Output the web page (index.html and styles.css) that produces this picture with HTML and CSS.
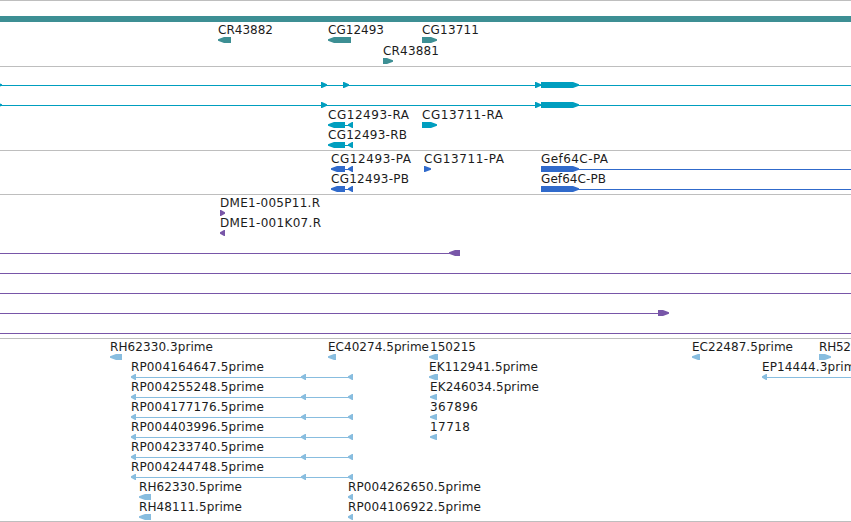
FILE: index.html
```
<!DOCTYPE html>
<html lang="en">
<head>
<meta charset="utf-8">
<title>Genome browser</title>
<link rel="stylesheet" href="styles.css">
</head>
<body>
<main class="browser" id="browser"></main>
<script src="tracks.js"></script>
</body>
</html>
```
FILE: styles.css
```
body {
  margin: 0;
  background: #fff;
  overflow: hidden;
}

.browser {
  display: flex;
  flex-direction: column;
  width: 851px;
  height: 521px;
  border-bottom: 1px solid #bebebe;
}

.track {
  flex: none;
  border-top: 1px solid #bebebe;
  fill: currentColor;
}

.track svg {
  display: block;
  width: 851px;
}

.gene { color: #3d8f94; }
.transcript { color: #009ebf; }
.protein { color: #306acb; }
.clone { color: #7856a8; }
.est { color: #88bddf; }

.line {
  shape-rendering: crispEdges;
}

.label {
  fill: #1c1c1c;
  font-family: "DejaVu Sans", sans-serif;
  font-size: 12px;
}
```
FILE: tracks.js
```
// Features: ["text", x, baseline, label, width], ["line", x1, x2, y],
// ["left" | "right", x1, x2, top], ["bar", x1, x2, top].
const tracks = [
  { name: "gene", top: 1, height: 65, features: [
    ["bar", 0, 851, 16],
    ["text", 218, 34, "CR43882", 55], ["left", 218, 231, 37],
    ["text", 328, 34, "CG12493", 56], ["left", 328, 351, 37],
    ["text", 422, 34, "CG13711", 57], ["right", 422, 437, 37],
    ["text", 383, 55, "CR43881", 56], ["right", 383, 393, 58]
  ]},
  { name: "transcript", top: 67, height: 83, features: [
    ["line", 0, 851, 85], ["right", -4, 2, 82], ["right", 321, 327, 82],
    ["right", 343, 349, 82], ["right", 535, 541, 82], ["right", 541, 579, 82],
    ["line", 0, 851, 105], ["right", -4, 2, 102], ["right", 321, 327, 102],
    ["right", 535, 541, 102], ["right", 541, 579, 102],
    ["text", 328, 119, "CG12493-RA", 81], ["left", 328, 345, 122],
    ["line", 345, 349, 125], ["left", 348, 353, 122],
    ["text", 422, 119, "CG13711-RA", 81], ["right", 422, 437, 122],
    ["text", 328, 139, "CG12493-RB", 79], ["left", 328, 345, 142],
    ["line", 345, 349, 145], ["left", 348, 353, 142]
  ]},
  { name: "protein", top: 151, height: 43, features: [
    ["text", 331, 163, "CG12493-PA", 80], ["left", 331, 345, 166],
    ["line", 345, 349, 169], ["left", 348, 353, 166],
    ["text", 424, 163, "CG13711-PA", 80], ["right", 424, 431, 166],
    ["text", 541, 163, "Gef64C-PA", 67], ["right", 541, 579, 166], ["line", 578, 851, 169],
    ["text", 331, 183, "CG12493-PB", 78], ["left", 331, 345, 186],
    ["line", 345, 349, 189], ["left", 348, 353, 186],
    ["text", 541, 183, "Gef64C-PB", 65], ["right", 541, 579, 186], ["line", 578, 851, 189]
  ]},
  { name: "clone", top: 195, height: 143, features: [
    ["text", 220, 207, "DME1-005P11.R", 100], ["right", 220, 225, 210],
    ["text", 220, 227, "DME1-001K07.R", 101], ["left", 220, 225, 230],
    ["line", 0, 450, 253], ["left", 449, 460, 250],
    ["line", 0, 851, 273], ["line", 0, 851, 293],
    ["line", 0, 658, 313], ["right", 658, 669, 310],
    ["line", 0, 851, 333]
  ]},
  { name: "est", top: 339, height: 182, features: [
    ["text", 110, 351, "RH62330.3prime", 103], ["left", 110, 122, 354],
    ["text", 328, 351, "EC40274.5prime", 101], ["left", 328, 336, 354],
    ["text", 430, 351, "150215", 46], ["left", 429, 438, 354],
    ["text", 692, 351, "EC22487.5prime", 101], ["left", 692, 700, 354],
    ["text", 819, 351, "RH52", 32], ["right", 819, 831, 354],
    ["text", 762, 371, "EP14444.3prime", 101], ["left", 762, 767, 374], ["line", 766, 851, 377],
    ["text", 429, 371, "EK112941.5prime", 109], ["left", 429, 438, 374],
    ["text", 430, 391, "EK246034.5prime", 109], ["left", 430, 437, 394],
    ["text", 430, 411, "367896", 48], ["left", 430, 437, 414],
    ["text", 430, 431, "17718", 40], ["left", 430, 437, 434],
    ["text", 139, 491, "RH62330.5prime", 103], ["left", 139, 151, 494],
    ["text", 139, 511, "RH48111.5prime", 103], ["left", 139, 151, 514],
    ["text", 348, 491, "RP004262650.5prime", 133], ["left", 348, 353, 494],
    ["text", 348, 511, "RP004106922.5prime", 133], ["left", 348, 353, 514]
  ]}
];

// Spliced ESTs share the same three exons.
["RP004164647", "RP004255248", "RP004177176", "RP004403996", "RP004233740", "RP004244748"]
  .forEach((id, i) => {
    const y = 371 + i * 20;
    tracks[4].features.push(
      ["text", 131, y, id + ".5prime", 133], ["line", 134, 350, y + 6],
      ["left", 131, 136, y + 3], ["left", 301, 306, y + 3], ["left", 348, 353, y + 3]
    );
  });

function draw([kind, a, b, c, width]) {
  if (kind === "text") {
    return `<text class="label" x="${a}" y="${b}" textLength="${width}">${c}</text>`;
  }
  if (kind === "line") {
    return `<rect class="line" x="${a}" y="${c}" width="${b - a}" height="1"/>`;
  }
  if (kind === "bar") {
    return `<rect class="line" x="${a}" y="${c}" width="${b - a}" height="6"/>`;
  }
  const head = Math.min(6, b - a - 1);
  return kind === "left"
    ? `<path d="M${b} ${c}H${a + head}L${a} ${c + 2.3}V${c + 3.7}L${a + head} ${c + 6}H${b}Z"/>`
    : `<path d="M${a} ${c}H${b - head}L${b} ${c + 2.3}V${c + 3.7}L${b - head} ${c + 6}H${a}Z"/>`;
}

document.getElementById("browser").innerHTML = tracks.map(t =>
  `<section class="track ${t.name}"><svg height="${t.height}" viewBox="0 ${t.top} 851 ${t.height}">${t.features.map(draw).join("")}</svg></section>`
).join("");
```
